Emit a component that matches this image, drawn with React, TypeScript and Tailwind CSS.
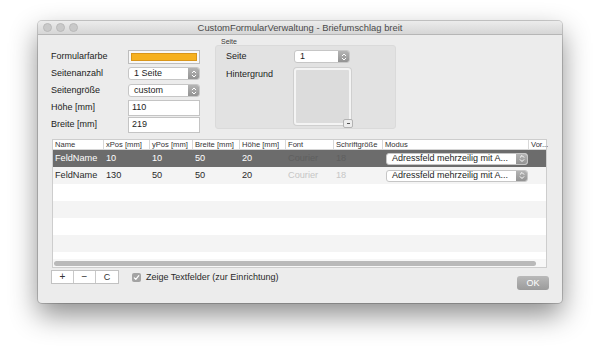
import type { ReactNode } from 'react';

const font = { fontFamily: '"Liberation Sans", Arial, sans-serif' };

// little up/down arrows on the right of a mac popup button
function Stepper({ h = 12 }: { h?: number }) {
  return (
    <div className="w-[11px] self-stretch rounded-r-[2px] bg-gradient-to-b from-[#b4b4b4] to-[#939393] flex items-center justify-center">
      <svg width="6" height={h - 3} viewBox="0 0 6 9" fill="none" stroke="#fff" strokeWidth="1" strokeLinecap="round" strokeLinejoin="round">
        <path d="M1.2 3.3 3 1.5 4.8 3.3" />
        <path d="M1.2 5.7 3 7.5 4.8 5.7" />
      </svg>
    </div>
  );
}

function Popup({ value, w, h = 13 }: { value: string; w: number; h?: number }) {
  return (
    <div
      className="flex items-stretch bg-white border border-[#c6c6c6] rounded-[3px] text-[9px] text-[#1d1d1d]"
      style={{ width: w, height: h }}
    >
      <div className="flex-1 flex items-center pl-[5px] leading-none overflow-hidden whitespace-nowrap">{value}</div>
      <Stepper h={h} />
    </div>
  );
}

function TextField({ value }: { value: string }) {
  return (
    <div className="w-[72px] h-[16px] bg-white border border-[#c4c4c4] flex items-center pl-[3px] text-[9px] text-[#1d1d1d] leading-none">
      {value}
    </div>
  );
}

function Label({ children }: { children: ReactNode }) {
  return <div className="text-[9px] text-[#222] leading-none">{children}</div>;
}

const cols = [
  { name: 'Name', w: 51 },
  { name: 'xPos [mm]', w: 46 },
  { name: 'yPos [mm]', w: 43 },
  { name: 'Breite [mm]', w: 47 },
  { name: 'Höhe [mm]', w: 46 },
  { name: 'Font', w: 48 },
  { name: 'Schriftgröße', w: 49 },
  { name: 'Modus', w: 146 },
  { name: 'Vor...', w: 19 },
];

const rows = [
  ['FeldName', '10', '10', '50', '20', 'Courier', '18'],
  ['FeldName', '130', '50', '50', '20', 'Courier', '18'],
];

export default function App() {
  return (
    <div className="w-[600px] h-[357px] bg-white pt-[21px] pl-[38px] overflow-hidden" style={font}>
      <div className="w-[524px] h-[282px] bg-[#ececec] rounded-[4px] flex flex-col overflow-hidden shadow-[0_12px_28px_rgba(0,0,0,0.45),0_0_0_1px_rgba(0,0,0,0.18)]">
        {/* title bar */}
        <div className="relative h-[14px] shrink-0 bg-gradient-to-b from-[#ececec] to-[#d6d6d6] border-b border-[#b6b6b6] flex items-center pl-[5px] gap-[4px]">
          <div className="w-[9px] h-[9px] rounded-full bg-[#c9c9c9] border border-[#b9b9b9]" />
          <div className="w-[9px] h-[9px] rounded-full bg-[#c9c9c9] border border-[#b9b9b9]" />
          <div className="w-[9px] h-[9px] rounded-full bg-[#c9c9c9] border border-[#b9b9b9]" />
          <div className="absolute inset-0 flex items-center justify-center text-[9.4px] text-[#4a4a4a] leading-none">
            CustomFormularVerwaltung - Briefumschlag breit
          </div>
        </div>

        {/* top section */}
        <div className="h-[104px] shrink-0 flex pl-[13px]">
          <div className="mt-[13px] grid grid-cols-[77px_72px] auto-rows-[17px] items-center self-start">
            <Label>Formularfarbe</Label>
            <div className="w-[72px] h-[14px] bg-[#f8f8f8] border border-[#bdbdbd] p-[2px]">
              <div className="w-full h-full bg-[#f6b11f] border border-[#d9961a]" />
            </div>
            <Label>Seitenanzahl</Label>
            <Popup value="1 Seite" w={72} />
            <Label>Seitengröße</Label>
            <Popup value="custom" w={72} />
            <Label>Höhe [mm]</Label>
            <TextField value="110" />
            <Label>Breite [mm]</Label>
            <TextField value="219" />
          </div>

          <div className="ml-[15px] mt-[3px] w-[181px] flex flex-col">
            <div className="h-[7px] pl-[6px] text-[7px] leading-[7px] text-[#3a3a3a]">Seite</div>
            <div className="h-[84px] bg-[#e2e2e2] border border-[#dadada] rounded-[3px] pl-[10px] pt-[4px] grid grid-cols-[68px_57px] grid-rows-[13px_auto] gap-y-[5px]">
              <div className="flex items-center text-[9px] text-[#222] leading-none">Seite</div>
              <Popup value="1" w={56} h={13} />
              <div className="pt-[2px] text-[9px] text-[#222] leading-none">Hintergrund</div>
              <div className="relative w-[57px] h-[57px] bg-[#dcdcdc] border-2 border-[#f4f4f4] rounded-[3px] shadow-[0_0_0_1px_#cfcfcf]">
                <div className="absolute right-[-4px] bottom-[-5px] w-[10px] h-[9px] bg-[#ededed] border border-[#b3b3b3] rounded-[2px] flex items-center justify-center">
                  <div className="w-[3px] h-[1px] bg-[#555]" />
                </div>
              </div>
            </div>
          </div>
        </div>

        {/* table */}
        <div className="ml-[14px] w-[495px] h-[129px] shrink-0 bg-white border border-[#cdcdcd] flex flex-col">
          <div className="h-[10px] shrink-0 flex border-b border-[#d6d6d6]">
            {cols.map((c, i) => (
              <div
                key={c.name}
                className={`shrink-0 pl-[2px] text-[7.6px] leading-[10px] text-[#333] whitespace-nowrap overflow-hidden ${i < cols.length - 1 ? 'border-r border-[#d8d8d8]' : ''}`}
                style={{ width: c.w }}
              >
                {c.name}
              </div>
            ))}
          </div>
          <div className="flex-1 overflow-hidden flex flex-col">
            {[0, 1, 2, 3, 4, 5, 6].map((r) => {
              const data = rows[r];
              const selected = r === 0;
              const bg = selected ? 'bg-[#6c6c6c]' : r % 2 === 1 ? 'bg-[#f4f4f4]' : 'bg-white';
              return (
                <div key={r} className={`h-[17px] shrink-0 flex items-center ${bg}`}>
                  {data &&
                    cols.map((c, i) => {
                      let content: ReactNode = null;
                      if (i < 7) {
                        const dim = i >= 5;
                        const color = selected
                          ? dim
                            ? 'text-[#5f5f5f]'
                            : 'text-white'
                          : dim
                            ? 'text-[#c6c6c6]'
                            : 'text-[#2a2a2a]';
                        content = <span className={`text-[9.2px] leading-none ${color}`}>{data[i]}</span>;
                      } else if (i === 7) {
                        content = <Popup value="Adressfeld mehrzeilig mit A..." w={142} h={12} />;
                      }
                      return (
                        <div key={c.name} className="shrink-0 flex items-center" style={{ width: c.w, paddingLeft: i === 7 ? 3 : 2 }}>
                          {content}
                        </div>
                      );
                    })}
                </div>
              );
            })}
          </div>
          <div className="h-[8px] shrink-0 bg-[#f7f7f7] flex items-center pl-[1px] pr-[10px]">
            <div className="h-[5px] w-full rounded-full bg-[#b9b9b9]" />
          </div>
        </div>

        {/* bottom bar */}
        <div className="flex-1 flex items-start pl-[13px] pr-[13px] pt-[2px]">
          <div className="h-[14px] flex border border-[#c2c2c2] bg-white text-[10px] text-[#333] leading-none">
            <div className="w-[22px] flex items-center justify-center border-r border-[#c9c9c9]">+</div>
            <div className="w-[22px] flex items-center justify-center border-r border-[#c9c9c9]">−</div>
            <div className="w-[22px] flex items-center justify-center text-[9px]">C</div>
          </div>
          <div className="ml-[13px] mt-[3px] flex items-center gap-[5px]">
            <div className="w-[9px] h-[9px] rounded-[2px] bg-[#a3a3a3] flex items-center justify-center">
              <svg width="7" height="7" viewBox="0 0 7 7" fill="none" stroke="#fff" strokeWidth="1.2" strokeLinecap="round" strokeLinejoin="round">
                <path d="M1.3 3.8 2.8 5.3 5.8 1.6" />
              </svg>
            </div>
            <span className="text-[9px] text-[#2a2a2a] leading-none">Zeige Textfelder (zur Einrichtung)</span>
          </div>
          <div className="ml-auto mt-[6px] w-[32px] h-[14px] rounded-[3px] bg-gradient-to-b from-[#b9b9b9] to-[#9b9b9b] flex items-center justify-center text-[9px] text-white leading-none">
            OK
          </div>
        </div>
      </div>
    </div>
  );
}
